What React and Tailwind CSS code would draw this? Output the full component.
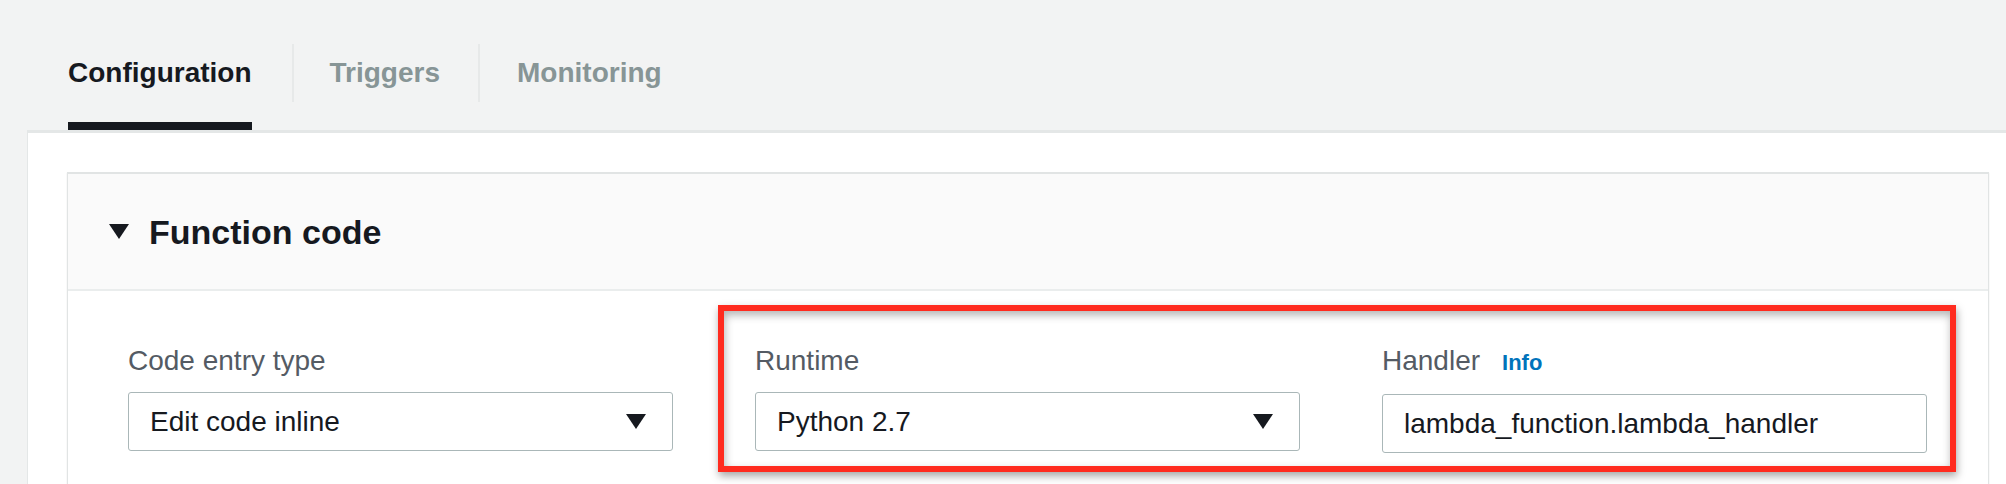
function Caret({ className = "" }) {
  return (
    <svg width="20" height="15" viewBox="0 0 20 15" className={className}>
      <polygon points="0,0 20,0 10,15" fill="#16191f" />
    </svg>
  );
}

function Select({ value }) {
  return (
    <div className="flex h-[59px] items-center justify-between rounded-[3px] border border-[#aab7b8] bg-white pl-[21px] pr-[26px] text-[28px] text-[#16191f]">
      <span>{value}</span>
      <Caret />
    </div>
  );
}

export default function App() {
  return (
    <div
      className="relative h-[484px] w-[2006px] overflow-hidden bg-[#f2f3f3]"
      style={{ fontFamily: "'Liberation Sans', Arial, sans-serif" }}
    >
      {/* Tabs */}
      <div className="flex pl-[28px] pt-[44px] text-[28px] font-bold">
        <div className="px-[40px]">
          <div className="h-[58px] leading-[58px] text-[#16191f]">Configuration</div>
          <div className="mt-[20px] h-[8px] bg-[#16191f]" />
        </div>
        <div className="h-[58px] w-[2px] bg-[#e7e9e9]" />
        <div className="pl-[36px] pr-[38px]">
          <div className="h-[58px] leading-[58px] text-[#879596]">Triggers</div>
        </div>
        <div className="h-[58px] w-[2px] bg-[#e7e9e9]" />
        <div className="px-[37px]">
          <div className="h-[58px] leading-[58px] text-[#879596]">Monitoring</div>
        </div>
      </div>

      {/* Panel */}
      <div className="ml-[27px] h-[400px] border-l border-t-[3px] border-[#e4e7e7] bg-white pl-[39px] pt-[39px]">
        <div className="h-[360px] w-[1922px] border border-t-2 border-[#e1e4e4] bg-white shadow-[0_1px_1px_0_rgba(0,28,36,0.15)]">
          <div className="flex h-[117px] items-center gap-[20px] border-b-2 border-[#eaeded] bg-[#fafafa] pl-[41px]">
            <Caret />
            <h2 className="text-[34px] font-bold leading-none text-[#16191f]">Function code</h2>
          </div>
          <div className="grid grid-cols-[545px_545px_545px] gap-x-[82px] pl-[60px] pt-[50px]">
            <div>
              <div className="text-[28px] leading-[40px] text-[#545b64]">Code entry type</div>
              <div className="mt-[11px]">
                <Select value="Edit code inline" />
              </div>
            </div>
            <div>
              <div className="text-[28px] leading-[40px] text-[#545b64]">Runtime</div>
              <div className="mt-[11px]">
                <Select value="Python 2.7" />
              </div>
            </div>
            <div>
              <div className="flex items-baseline gap-[22px] leading-[40px]">
                <span className="text-[28px] text-[#545b64]">Handler</span>
                <span className="text-[22px] font-bold text-[#0073bb]">Info</span>
              </div>
              <div className="mt-[11px] flex h-[59px] items-center rounded-[3px] border border-[#aab7b8] bg-white pl-[21px] text-[28px] text-[#16191f]">
                lambda_function.lambda_handler
              </div>
            </div>
          </div>
        </div>
      </div>

      {/* Annotation highlight */}
      <div className="absolute left-[718px] top-[305px] h-[167px] w-[1238px] border-[6px] border-[#ff2b1f] shadow-[1px_4px_8px_rgba(0,0,0,0.35),inset_1px_4px_8px_rgba(0,0,0,0.3)]" />
    </div>
  );
}
